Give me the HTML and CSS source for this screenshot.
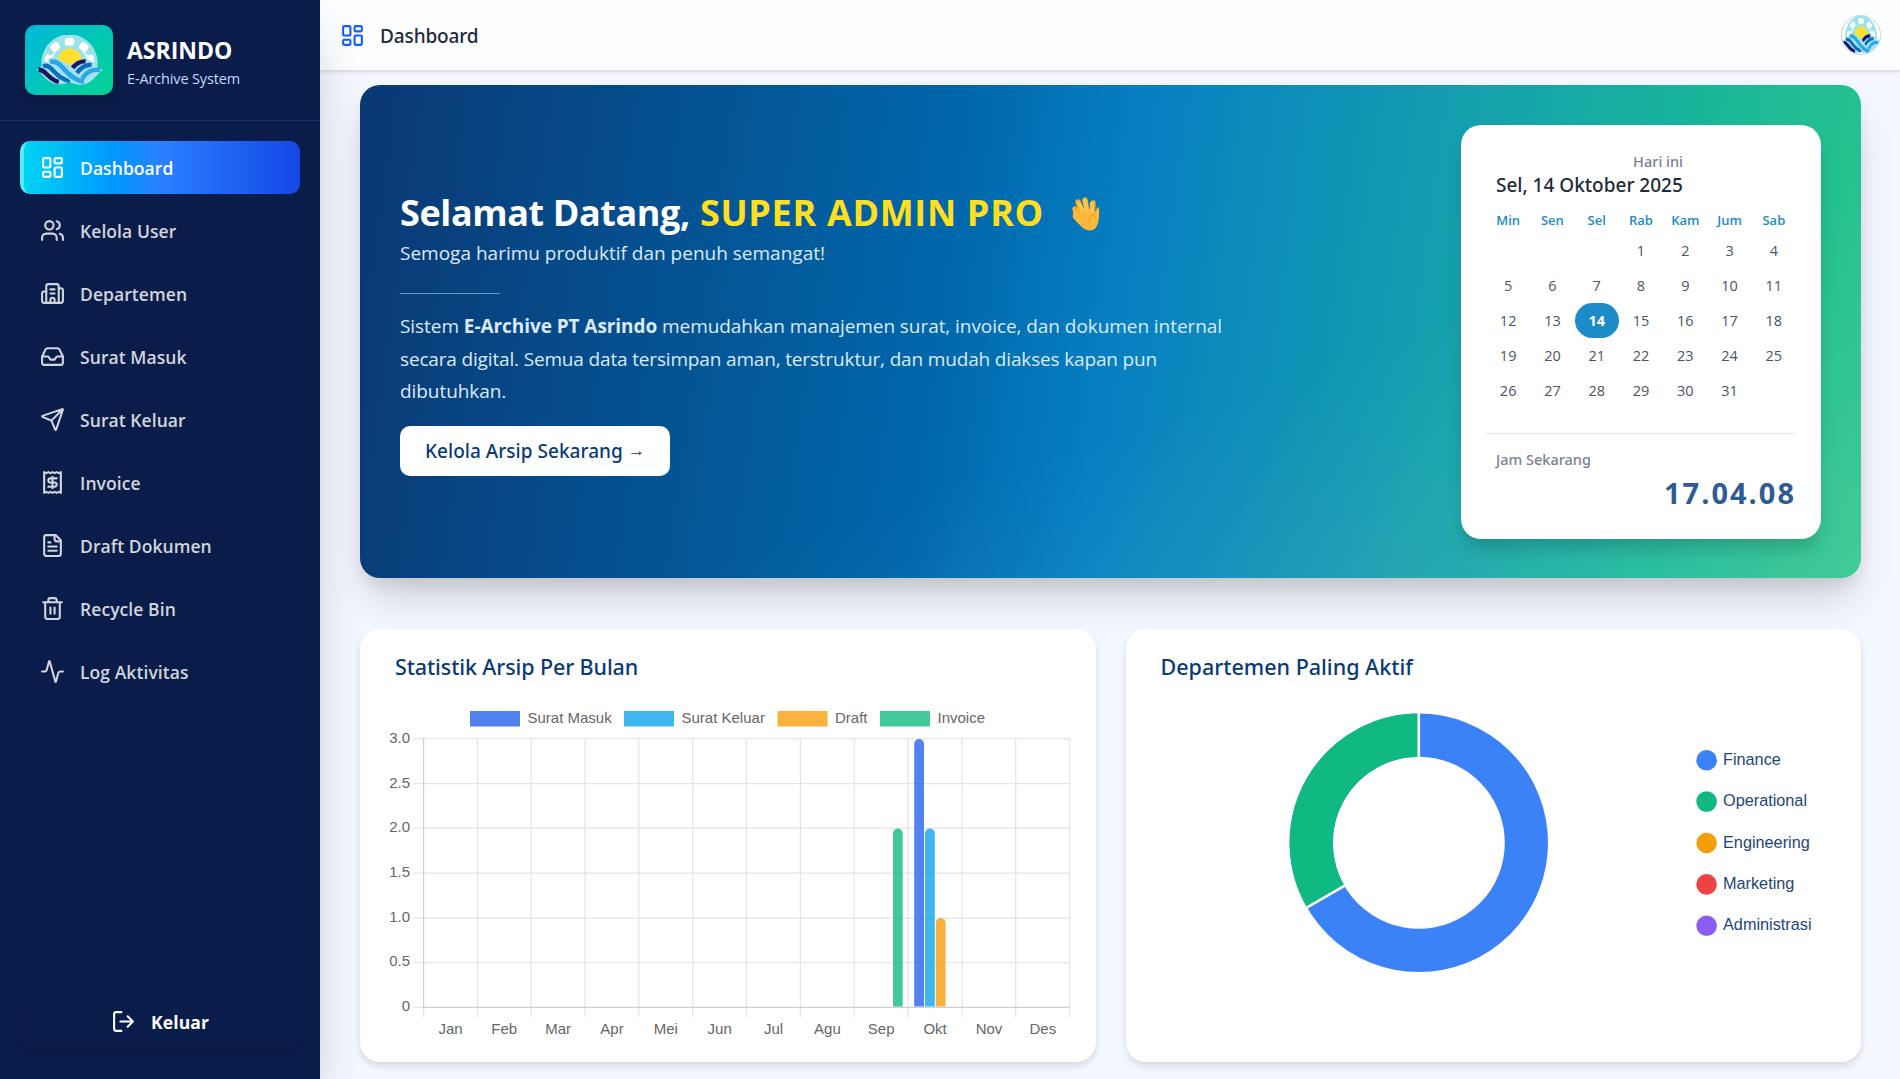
FILE: index.html
```html
<!DOCTYPE html>
<html lang="id">
<head>
<meta charset="utf-8">
<title>Dashboard - ASRINDO E-Archive</title>
<link rel="stylesheet" href="styles.css">
</head>
<body>
<svg class="defs" width="0" height="0" aria-hidden="true">
  <symbol id="dash" viewBox="0 0 24 24"><rect x="3" y="3" width="7" height="9" rx="1"/><rect x="14" y="3" width="7" height="5" rx="1"/><rect x="14" y="12" width="7" height="9" rx="1"/><rect x="3" y="16" width="7" height="5" rx="1"/></symbol>
  <symbol id="art" viewBox="0 0 200 148" preserveAspectRatio="none">
    <path d="M17 95A84 84 0 1 1 183 95Z" fill="#9be3e9"/>
    <path d="M34 92A67 62 0 0 1 166 92" fill="none" stroke="#fff" stroke-width="7"/>
    <g fill="#fff"><rect x="86" y="8" width="28" height="24" rx="9"/><rect x="44" y="24" width="27" height="24" rx="9" transform="rotate(-38 57 36)"/><rect x="129" y="24" width="27" height="24" rx="9" transform="rotate(38 143 36)"/><rect x="27" y="58" width="18" height="24" rx="6" transform="rotate(20 36 70)"/><rect x="155" y="58" width="18" height="24" rx="6" transform="rotate(-20 164 70)"/></g>
    <circle cx="100" cy="85" r="53" fill="#9be3e9"/>
    <circle cx="101" cy="77" r="37" fill="#ffdf30"/>
    <path d="M0 103C18 98 24 82 44 72Q62 65 78 76L100 90L122 76Q140 66 158 74C174 84 182 98 200 103C184 112 178 130 156 142Q130 152 100 140Q72 151 48 142C24 130 18 110 0 103Z" fill="#a4e2f2"/>
    <g fill="none" stroke-width="13">
      <path d="M7 103C32 102 32 130 68 139" stroke="#1c1466"/>
      <path d="M21 92C50 84 55 130 102 136" stroke="#0a70bd"/>
      <path d="M109 97C120 84 132 77 148 78" stroke="#1c1466"/>
      <path d="M122 112C135 95 148 88 166 88" stroke="#0a70bd"/>
      <path d="M137 130C153 107 166 101 192 103" stroke="#2ba7e2"/>
    </g>
    <path d="M40 79C76 68 88 132 137 138" fill="none" stroke="#a4e2f2" stroke-width="21"/>
    <path d="M42 80C76 68 86 129 143 138" fill="none" stroke="#2ba7e2" stroke-width="14"/>
  </symbol>
</svg>
<div class="app">
  <aside class="side">
    <div class="brand">
      <div class="logo"><svg width="67" height="50"><use href="#art"/></svg></div>
      <div class="title"><div class="name">ASRINDO</div><div class="tag">E-Archive System</div></div>
    </div>
    <nav class="nav">
      <a class="item on"><svg class="ic"><use href="#dash"/></svg><span>Dashboard</span></a>
      <a class="item"><svg class="ic" viewBox="0 0 24 24"><path d="M16 21v-2a4 4 0 0 0-4-4H6a4 4 0 0 0-4 4v2"/><circle cx="9" cy="7" r="4"/><path d="M22 21v-2a4 4 0 0 0-3-3.87M16 3.13a4 4 0 0 1 0 7.75"/></svg><span>Kelola User</span></a>
      <a class="item"><svg class="ic" viewBox="0 0 24 24"><path d="M10 12h4M10 8h4M14 21v-3a2 2 0 0 0-4 0v3"/><path d="M6 10H4a2 2 0 0 0-2 2v7a2 2 0 0 0 2 2h16a2 2 0 0 0 2-2V9a2 2 0 0 0-2-2h-2"/><path d="M6 21V5a2 2 0 0 1 2-2h8a2 2 0 0 1 2 2v16"/></svg><span>Departemen</span></a>
      <a class="item"><svg class="ic" viewBox="0 0 24 24"><path d="M22 12h-6l-2 3h-4l-2-3H2"/><path d="M5.45 5.11 2 12v6a2 2 0 0 0 2 2h16a2 2 0 0 0 2-2v-6l-3.45-6.89A2 2 0 0 0 16.76 4H7.24a2 2 0 0 0-1.79 1.11z"/></svg><span>Surat Masuk</span></a>
      <a class="item"><svg class="ic" viewBox="0 0 24 24"><path d="M14.536 21.686a.5.5 0 0 0 .937-.024l6.5-19a.496.496 0 0 0-.635-.635l-19 6.5a.5.5 0 0 0-.024.937l7.93 3.18a2 2 0 0 1 1.112 1.11zM21.854 2.147l-10.94 10.939"/></svg><span>Surat Keluar</span></a>
      <a class="item"><svg class="ic" viewBox="0 0 24 24"><path d="M4 2v20l2-1 2 1 2-1 2 1 2-1 2 1 2-1 2 1V2l-2 1-2-1-2 1-2-1-2 1-2-1-2 1Z"/><path d="M16 8h-6a2 2 0 1 0 0 4h4a2 2 0 1 1 0 4H8M12 17.5v-11"/></svg><span>Invoice</span></a>
      <a class="item"><svg class="ic" viewBox="0 0 24 24"><path d="M15 2H6a2 2 0 0 0-2 2v16a2 2 0 0 0 2 2h12a2 2 0 0 0 2-2V7Z"/><path d="M14 2v4a2 2 0 0 0 2 2h4M10 9H8M16 13H8M16 17H8"/></svg><span>Draft Dokumen</span></a>
      <a class="item"><svg class="ic" viewBox="0 0 24 24"><path d="M3 6h18M19 6v14a2 2 0 0 1-2 2H7a2 2 0 0 1-2-2V6M8 6V4a2 2 0 0 1 2-2h4a2 2 0 0 1 2 2v2M10 11v6M14 11v6"/></svg><span>Recycle Bin</span></a>
      <a class="item"><svg class="ic" viewBox="0 0 24 24"><path d="M22 12h-2.48a2 2 0 0 0-1.93 1.46l-2.35 8.36a.25.25 0 0 1-.48 0L9.24 2.18a.25.25 0 0 0-.48 0l-2.35 8.36A2 2 0 0 1 4.49 12H2"/></svg><span>Log Aktivitas</span></a>
    </nav>
    <button class="out"><svg class="ic" viewBox="0 0 24 24"><path d="M10 3H5a2 2 0 0 0-2 2v14a2 2 0 0 0 2 2h5M16 17l5-5-5-5M21 12H9"/></svg><span>Keluar</span></button>
  </aside>
  <div class="page">
    <header class="top"><svg class="ic"><use href="#dash"/></svg><span class="crumb">Dashboard</span><span class="avatar"><svg width="38" height="38"><use href="#art"/></svg></span></header>
    <main class="main">
      <section class="hero">
        <div class="intro">
          <h1><span class="greet">Selamat Datang,</span><span class="who">SUPER ADMIN PRO</span><svg class="wave" width="34" height="38" viewBox="0 0 34 38"><g fill="none" stroke="#1268a8" stroke-width="1.2"><path d="M18 1q6 2 8 7M15 3q5 1 7 5M1 24q1 5 5 7M4 22q1 5 4 7"/></g><path d="M9 16L14 28M12 9L18 24M19 7L22 23M27 10L26 22" fill="none" stroke="#f6ae2c" stroke-width="5.4" stroke-linecap="round"/><path d="M9 20L13 28M13 10L19 24M19 8L22 23M26 11L26 22" fill="none" stroke="#ffc44a" stroke-width="4" stroke-linecap="round"/><path d="M11 22Q20 15 28 21Q33 10 33 16Q34 34 27 37Q19 39 13 31Q5 24 7 22Q8 20 12 24Z" fill="#ffb83b"/><path d="M23 29Q24 22 29 20" fill="none" stroke="#ee9327" stroke-width="1"/></svg></h1>
          <p class="sub">Semoga harimu produktif dan penuh semangat!</p>
          <div class="rule"></div>
          <p class="desc">Sistem <b>E-Archive PT Asrindo</b> memudahkan manajemen surat, invoice, dan dokumen internal<br><span class="line2">secara digital. Semua data tersimpan aman, terstruktur, dan mudah diakses kapan pun</span><br>dibutuhkan.</p>
          <button class="cta"><span>Kelola Arsip Sekarang</span><span class="arrow">→</span></button>
        </div>
        <div class="cal">
          <div class="today"><div class="small">Hari ini</div><div class="date">Sel, 14 Oktober 2025</div></div>
          <div class="week"><span>Min</span><span>Sen</span><span>Sel</span><span>Rab</span><span>Kam</span><span>Jum</span><span>Sab</span></div>
          <div class="days"><i></i><i></i><i></i><span>1</span><span>2</span><span>3</span><span>4</span><span>5</span><span>6</span><span>7</span><span>8</span><span>9</span><span>10</span><span>11</span><span>12</span><span>13</span><span class="now">14</span><span>15</span><span>16</span><span>17</span><span>18</span><span>19</span><span>20</span><span>21</span><span>22</span><span>23</span><span>24</span><span>25</span><span>26</span><span>27</span><span>28</span><span>29</span><span>30</span><span>31</span></div>
          <div class="clock"><span class="small">Jam Sekarang</span><div class="time">17.04.08</div></div>
        </div>
      </section>
      <div class="cards">
        <section class="card">
          <h2>Statistik Arsip Per Bulan</h2>
          <svg class="chart" width="736" height="360" viewBox="360 702 736 360">
            <g><rect x="470" y="711" width="50" height="15.5" fill="#5181ef"/><rect x="624" y="711" width="50" height="15.5" fill="#3fb6ed"/><rect x="777.5" y="711" width="50" height="15.5" fill="#f9b13f"/><rect x="880" y="711" width="50" height="15.5" fill="#41c99a"/></g>
            <g class="lab"><text x="527.5" y="722.5">Surat Masuk</text><text x="681.5" y="722.5">Surat Keluar</text><text x="835" y="722.5">Draft</text><text x="937.5" y="722.5">Invoice</text></g>
            <path stroke="#e5e5e5" stroke-width="1.25" d="M413.5 738.6H1070M413.5 783.6H1070M413.5 828.2H1070M413.5 873.2H1070M413.5 918.2H1070M413.5 962.5H1070"/>
            <path stroke="#e5e5e5" stroke-width="1.25" d="M477.5 738V1017M531.3 738V1017M585.1 738V1017M638.8 738V1017M692.6 738V1017M746.4 738V1017M800.4 738V1017M854.3 738V1017M908.2 738V1017M962.1 738V1017M1015.7 738V1017M1069.5 738V1017M423.6 1007V1017M413.5 1007.4H424"/>
            <path stroke="#cfcfcf" stroke-width="1.25" d="M423.6 738V1007.4H1070" fill="none"/>
            <g fill-opacity=".8"><path d="M893 1006.5V833.5a4.8 5 0 0 1 9.7 0V1006.5Z" fill="#10b981"/><path d="M914.2 1006.5V744a4.9 5 0 0 1 9.8 0V1006.5Z" fill="#2563eb"/><path d="M925 1006.5V833.5a4.9 5 0 0 1 9.8 0V1006.5Z" fill="#0ea5e9"/><path d="M935.8 1006.5V923a4.9 5 0 0 1 9.8 0V1006.5Z" fill="#f59e0b"/></g>
            <g class="lab" text-anchor="end"><text x="410" y="743">3.0</text><text x="410" y="788">2.5</text><text x="410" y="832">2.0</text><text x="410" y="877">1.5</text><text x="410" y="921.5">1.0</text><text x="410" y="966">0.5</text><text x="410" y="1010.5">0</text></g>
            <g class="lab" text-anchor="middle"><text x="450.5" y="1033.5">Jan</text><text x="504.3" y="1033.5">Feb</text><text x="558.2" y="1033.5">Mar</text><text x="612" y="1033.5">Apr</text><text x="665.8" y="1033.5">Mei</text><text x="719.7" y="1033.5">Jun</text><text x="773.5" y="1033.5">Jul</text><text x="827.4" y="1033.5">Agu</text><text x="881.2" y="1033.5">Sep</text><text x="935.1" y="1033.5">Okt</text><text x="989" y="1033.5">Nov</text><text x="1042.8" y="1033.5">Des</text></g>
          </svg>
        </section>
        <section class="card">
          <h2 class="active">Departemen Paling Aktif</h2>
          <svg class="chart" width="735" height="360" viewBox="1126 702 735 360">
            <g transform="translate(1418.8 842.8)"><circle r="107.6" fill="none" stroke="#3b82f6" stroke-width="43.2"/><path d="M0-107.6A107.6 107.6 0 0 0-93.18 53.8" fill="none" stroke="#10b981" stroke-width="43.2"/><path d="M0-84V-131M-72.7 42L-113.4 65.5" stroke="#fff" stroke-width="2.6"/></g>
            <g><circle cx="1706.6" cy="760.3" r="10.3" fill="#3b82f6"/><circle cx="1706.6" cy="801.6" r="10.3" fill="#10b981"/><circle cx="1706.6" cy="843" r="10.3" fill="#f59e0b"/><circle cx="1706.6" cy="884.4" r="10.3" fill="#ef4444"/><circle cx="1706.6" cy="925.8" r="10.3" fill="#8b5cf6"/></g>
            <g class="dept"><text x="1723" y="765">Finance</text><text x="1723" y="806">Operational</text><text x="1723" y="847.5">Engineering</text><text x="1723" y="888.5">Marketing</text><text x="1723" y="930">Administrasi</text></g>
          </svg>
        </section>
      </div>
    </main>
  </div>
</div>
</body>
</html>
```
FILE: styles.css
```css
* { box-sizing: border-box; }
body { margin: 0; height: 1079px; overflow: hidden; font-family: "Open Sans", "Noto Sans", sans-serif; background: #f4f7ff; }
h1, h2, p { margin: 0; }
button { border: 0; font-family: inherit; }
.defs { position: absolute; }
.app { display: flex; height: 1079px; }
.ic { width: 25px; height: 25px; flex: none; fill: none; stroke: currentColor; stroke-width: 2; stroke-linecap: round; stroke-linejoin: round; }
.crumb, .cta, .small, .date, h2 { font-family: "Noto Sans", sans-serif; font-weight: 500; }

/* Sidebar */
.side { width: 320px; flex: none; display: flex; flex-direction: column; background: #0a1c49; color: #fff; box-shadow: 0 25px 50px -12px rgba(0, 0, 0, .25); z-index: 2; }
.brand { display: flex; align-items: center; gap: 14px; height: 121px; padding: 0 25px; border-bottom: 1px solid #13306a; }
.logo { width: 88px; height: 70px; border-radius: 10px; background: linear-gradient(135deg, #00b8db, #00d492); display: grid; place-items: center; box-shadow: 0 6px 10px rgba(0, 0, 0, .12); }
.title { padding-top: 5px; }
.name { font-size: 23px; line-height: 31px; font-weight: 700; white-space: nowrap; }
.tag { font-size: 14.5px; line-height: 25px; letter-spacing: -.146px; color: #bedbff; white-space: nowrap; }
.nav { flex: 1; display: flex; flex-direction: column; gap: 10px; padding: 20px; }
.item { height: 53px; display: flex; align-items: center; gap: 15px; padding-left: 20px; border-radius: 10px; color: #d1d5dc; font-size: 17.5px; font-weight: 600; letter-spacing: .07px; white-space: nowrap; }
.item.on { color: #fff; padding-left: 16px; border-left: 4px solid #53eafd; background: linear-gradient(90deg, #00d3f2, #0099ff 32%, #2b7fff 50%, #1447e6); }
.out { display: flex; align-items: center; justify-content: center; gap: 15px; height: 52px; margin: 0 20px 31px; padding-bottom: 2px; border-radius: 12px; background: none; color: #fff; font-size: 17.5px; font-weight: 700; letter-spacing: .1px; box-shadow: 0 4px 6px -1px rgba(0, 0, 0, .12); }

/* Header */
.page { flex: 1; display: flex; flex-direction: column; }
.top { height: 70px; display: flex; align-items: center; gap: 15px; padding: 0 19px 0 20px; background: #fdfeff; box-shadow: 0 1px 4px rgba(0, 0, 0, .18); }
.top .ic { color: #155dfc; }
.crumb { padding-top: 1px; font-size: 19px; letter-spacing: -.12px; color: #1e2939; }
.avatar { margin-left: auto; width: 40px; height: 40px; border: 1px solid #cbd0da; border-radius: 50%; overflow: hidden; background: #fff; }

/* Welcome banner */
.main { padding: 15px 39px 0 40px; }
.hero { height: 493px; padding: 40px; border-radius: 20px; display: flex; align-items: center; justify-content: space-between; color: #fff; background: linear-gradient(to bottom right, transparent 60%, rgba(255, 255, 255, .1)), linear-gradient(98deg, #0a3873, #0067ab 39%, #067fc2 50%, #15a0ae 71%, #18b79a 86%, #2cc58a); box-shadow: 0 25px 40px -8px rgba(0, 0, 0, .18), 0 8px 14px rgba(0, 0, 0, .06); }
h1 { display: flex; align-items: center; height: 50px; font-size: 36px; font-weight: 700; white-space: nowrap; }
.greet { letter-spacing: -.4px; }
.who { margin-left: 10px; letter-spacing: .67px; color: #ffdf20; }
.wave { margin-left: 22px; }
.sub { font-size: 19px; line-height: 32px; color: #dbeafe; }
.rule { width: 100px; height: 1px; margin: 24px 0 16px; background: #6a9bc4; }
.desc { font-size: 19px; line-height: 32.5px; letter-spacing: -.063px; color: #dbeafe; white-space: nowrap; }
.line2 { letter-spacing: -.16px; }
.cta { display: flex; align-items: center; margin-top: 18px; width: 270px; height: 50px; padding: 0 25px; border-radius: 10px; background: #fff; color: #0a3a75; font-size: 19px; letter-spacing: .03px; white-space: nowrap; }
.arrow { margin-left: auto; font: 17px "Liberation Sans", sans-serif; }
.cal { width: 360px; height: 414px; padding: 25px; border-radius: 20px; background: #fff; box-shadow: 0 12px 18px -3px rgba(0, 0, 0, .18); }
.today { width: 187px; margin-left: 10px; text-align: right; white-space: nowrap; }
.small { font-size: 14.5px; line-height: 22px; color: #7a8290; }
.date { font-size: 19px; line-height: 27px; text-align: left; color: #1e2939; }
.week { display: grid; grid-template-columns: repeat(7, 1fr); margin-top: 9px; text-align: center; font-size: 13px; line-height: 24px; font-weight: 600; color: #1d8bc8; }
.days { display: grid; grid-template-columns: repeat(7, 1fr); grid-auto-rows: 35px; margin-top: 1px; text-align: center; font-size: 14.5px; line-height: 35px; color: #4a5565; }
.now { border-radius: 18px; background: #1d8bc8; color: #fff; font-weight: 700; }
.clock { margin-top: 25px; padding: 14px 0 0 10px; border-top: 1px solid #e5e7eb; }
.time { height: 50px; line-height: 46px; text-align: right; font-size: 29px; letter-spacing: 2px; font-weight: 700; color: #2f5b93; }

/* Chart cards */
.cards { display: grid; grid-template-columns: 1fr 1fr; gap: 30px; margin-top: 51px; }
.card { height: 433px; border-radius: 20px; background: #fff; box-shadow: 0 4px 7px rgba(0, 0, 0, .12); overflow: hidden; }
h2 { height: 73px; padding: 18px 35px 0; line-height: 40px; font-size: 21.5px; letter-spacing: -.12px; color: #0a3a75; white-space: nowrap; }
.active { letter-spacing: 0; }
.chart { display: block; }
.lab { font: 15px "Liberation Sans", Arial, sans-serif; fill: #666; }
.dept { font: 16.25px "Liberation Sans", Arial, sans-serif; fill: #1d4679; }
```
